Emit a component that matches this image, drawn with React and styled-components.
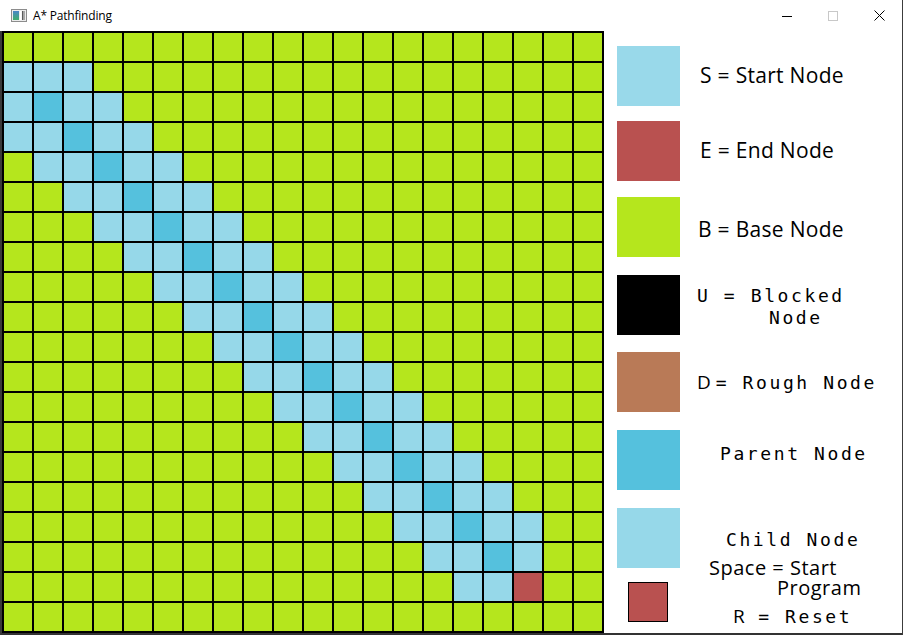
import React from 'react'
import styled, { createGlobalStyle } from 'styled-components'

const COLORS = {
  base: '#b5e61d',
  child: '#96d8e9',
  start: '#99d9ea',
  parent: '#55c1dd',
  end: '#b95150',
  rough: '#b97a57',
  blocked: '#000000',
}

const ROWS = 20
const COLS = 20
const START = [1, 0]
const END = [18, 17]

// the searched band that A* left behind on its way from S to E
const cellKind = (r, c) => {
  if (r === START[0] && c === START[1]) return 'start'
  if (r === END[0] && c === END[1]) return 'end'
  if (r < 1 || r > 18) return 'base'
  if (c === r - 1) return 'parent'
  if (c >= r - 3 && c <= Math.min(r + 1, 17)) return 'child'
  return 'base'
}

const GlobalStyle = createGlobalStyle`
  html, body {
    margin: 0;
    padding: 0;
    background: #ffffff;
  }
  body {
    font-family: 'Open Sans', 'Noto Sans', sans-serif;
    color: #000;
  }
`

const Window = styled.div`
  width: 903px;
  height: 635px;
  box-sizing: border-box;
  display: flex;
  flex-direction: column;
  border-right: 1px solid #3c3c3c;
  background: #fff;
  overflow: hidden;
`

const TitleBar = styled.div`
  height: 31px;
  flex-shrink: 0;
  display: flex;
  align-items: center;
  padding-left: 11px;
`

const Title = styled.span`
  margin-left: 6px;
  font-family: 'Open Sans', sans-serif;
  font-size: 12px;
  letter-spacing: -0.2px;
  color: #000;
  flex: 1;
  padding-bottom: 1px;
`

const Controls = styled.div`
  display: flex;
  height: 100%;
`

const ControlButton = styled.div`
  width: 46px;
  height: 100%;
  display: flex;
  align-items: center;
  justify-content: center;
`

const ClientArea = styled.div`
  flex: 1;
  display: flex;
  border-left: 2px solid #3a3a3a;
  border-bottom: 2px solid #333;
`

const Grid = styled.div`
  display: grid;
  grid-template-columns: repeat(${COLS}, 28px);
  grid-auto-rows: 28px;
  gap: 2px;
  padding: 2px;
  background: #000;
  align-self: flex-start;
`

const Cell = styled.div`
  background: ${p => COLORS[p.$kind]};
`

const Legend = styled.div`
  flex: 1;
  display: flex;
  flex-direction: column;
  padding: 15px 0 0 13px;
  background: #fff;
`

const LegendRow = styled.div`
  display: flex;
  align-items: center;
  height: 60px;
  margin-top: ${p => p.$gap || 0}px;
`

const Swatch = styled.div`
  width: 63px;
  height: 60px;
  flex-shrink: 0;
  background: ${p => COLORS[p.$kind]};
`

const Label = styled.div`
  margin-left: ${p => p.$indent}px;
  margin-top: ${p => (p.$nudge || 0) * 2}px;
  font-family: ${p =>
    p.$mono ? "'DejaVu Sans Mono', monospace" : "'Open Sans', sans-serif"};
  font-size: ${p => (p.$mono ? 18 : 21)}px;
  letter-spacing: ${p => (p.$mono ? 2.6 : 0.3)}px;
  line-height: 22px;
  white-space: pre;
`

const Line = styled.div`
  padding-left: ${p => p.$indent || 0}px;
`

const Letter = styled.span`
  font-family: 'Open Sans', sans-serif;
  font-size: 19px;
  letter-spacing: 0;
`

const Footer = styled.div`
  display: flex;
  margin-top: -10px;
`

const SmallSwatch = styled.div`
  width: 38px;
  height: 38px;
  margin: 24px 0 0 11px;
  border: 1px solid #000;
  background: ${COLORS.end};
  flex-shrink: 0;
`

const FooterText = styled.div`
  display: flex;
  flex-direction: column;
`

const FooterLine = styled.div`
  padding-left: ${p => p.$indent}px;
  margin-top: ${p => p.$gap || 0}px;
  font-family: ${p =>
    p.$mono ? "'DejaVu Sans Mono', monospace" : "'Open Sans', sans-serif"};
  font-size: ${p => (p.$mono ? 18 : 20)}px;
  letter-spacing: ${p => (p.$mono ? 2.6 : 0.5)}px;
  line-height: ${p => (p.$mono ? 26 : 20)}px;
  white-space: pre;
`

const AppIcon = () => (
  <svg width="16" height="14" viewBox="0 0 16 14">
    <defs>
      <linearGradient id="ic" x1="0" y1="0" x2="0" y2="1">
        <stop offset="0" stopColor="#4a86c8" />
        <stop offset="1" stopColor="#3fae6a" />
      </linearGradient>
    </defs>
    <rect x="0.5" y="0.5" width="15" height="12" fill="#ececec" stroke="#8c8c8c" />
    <rect x="2" y="2" width="6" height="9" fill="url(#ic)" />
    <rect x="9" y="2" width="1.5" height="9" fill="#ffffff" />
    <rect x="11" y="2" width="1.5" height="9" fill="#5a5a5a" />
    <rect x="13" y="2" width="1" height="9" fill="#a8a8a8" />
  </svg>
)

const MinimizeIcon = () => (
  <svg width="10" height="10" viewBox="0 0 10 10">
    <line x1="0" y1="5.5" x2="10" y2="5.5" stroke="#000" strokeWidth="1" />
  </svg>
)

const MaximizeIcon = () => (
  <svg width="10" height="10" viewBox="0 0 10 10">
    <rect x="0.5" y="0.5" width="9" height="9" fill="none" stroke="#c8c8c8" />
  </svg>
)

const CloseIcon = () => (
  <svg width="11" height="11" viewBox="0 0 11 11">
    <path d="M0.5 0.5 L10.5 10.5 M10.5 0.5 L0.5 10.5" stroke="#000" strokeWidth="1" />
  </svg>
)

const cells = []
for (let r = 0; r < ROWS; r++) {
  for (let c = 0; c < COLS; c++) {
    cells.push(<Cell key={`${r}-${c}`} $kind={cellKind(r, c)} />)
  }
}

export default function App() {
  return (
    <>
      <GlobalStyle />
      <Window>
        <TitleBar>
          <AppIcon />
          <Title>A* Pathfinding</Title>
          <Controls>
            <ControlButton>
              <MinimizeIcon />
            </ControlButton>
            <ControlButton>
              <MaximizeIcon />
            </ControlButton>
            <ControlButton>
              <CloseIcon />
            </ControlButton>
          </Controls>
        </TitleBar>
        <ClientArea>
          <Grid>{cells}</Grid>
          <Legend>
            <LegendRow>
              <Swatch $kind="start" />
              <Label $indent={20} $nudge={-1}>S = Start Node</Label>
            </LegendRow>
            <LegendRow $gap={15}>
              <Swatch $kind="end" />
              <Label $indent={20} $nudge={-1}>E = End Node</Label>
            </LegendRow>
            <LegendRow $gap={16}>
              <Swatch $kind="base" />
              <Label $indent={18} $nudge={2}>B = Base Node</Label>
            </LegendRow>
            <LegendRow $gap={18}>
              <Swatch $kind="blocked" />
              <Label $mono $indent={17} $nudge={2}>
                <Line>U = Blocked</Line>
                <Line $indent={72}>Node</Line>
              </Label>
            </LegendRow>
            <LegendRow $gap={17}>
              <Swatch $kind="rough" />
              <Label $mono $indent={17}>
                <Letter>D </Letter>= Rough Node
              </Label>
            </LegendRow>
            <LegendRow $gap={18}>
              <Swatch $kind="parent" />
              <Label $mono $indent={40} $nudge={-6}>Parent Node</Label>
            </LegendRow>
            <LegendRow $gap={18}>
              <Swatch $kind="child" />
              <Label $mono $indent={46} $nudge={2}>Child Node</Label>
            </LegendRow>
            <Footer>
              <SmallSwatch />
              <FooterText>
                <FooterLine $indent={41}>Space = Start</FooterLine>
                <FooterLine $indent={109}>Program</FooterLine>
                <FooterLine $mono $indent={65} $gap={5}>
                  <Letter>R</Letter> = Reset
                </FooterLine>
              </FooterText>
            </Footer>
          </Legend>
        </ClientArea>
      </Window>
    </>
  )
}
